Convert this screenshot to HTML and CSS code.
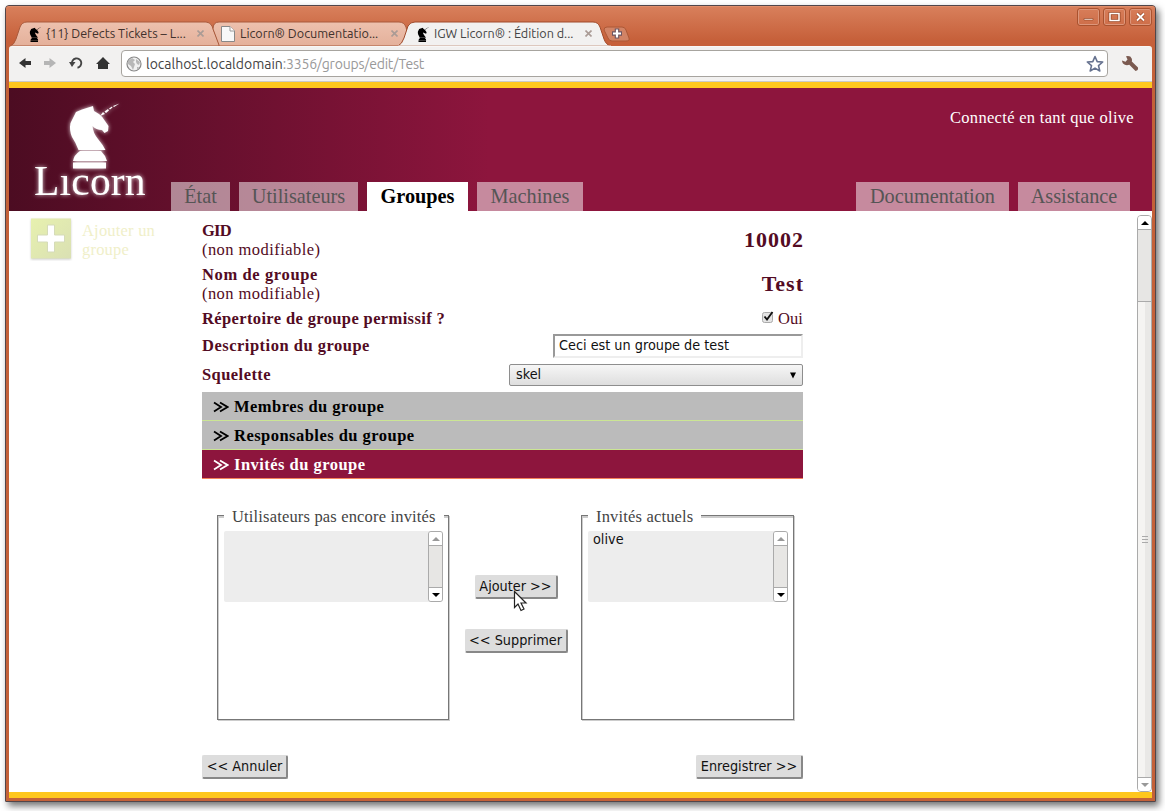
FILE: index.html
```html
<!DOCTYPE html>
<html lang="fr">
<head>
<meta charset="utf-8">
<title>IGW Licorn® : Édition de groupe</title>
<link rel="stylesheet" href="styles.css">
</head>
<body>
<svg class="defs" width="0" height="0">
  <defs>
    <linearGradient id="tabfill" x1="0" y1="0" x2="0" y2="1"><stop offset="0" stop-color="#edc1ae"/><stop offset="1" stop-color="#e4b09a"/></linearGradient>
    <symbol id="knight" viewBox="69 103 52 66">
      <path d="M93 106L94 111L99 114Q103 117 105 121L108.500 126L108 131L104.500 133L102 130Q96 130 92.500 126Q93 133 98 139Q103 145 105.500 150H78.500Q76 143 72 137Q69 130 70.500 123L76 112L82 109.500ZM80 151H101L105 156L107 161H73Q74 155 80 151ZM73 162.500H106V168.500H73Z"/>
      <path d="M100 116L103 112L105 114ZM104.500 111.500L108 109L109 110.500L106 113ZM109 108.500L112 106.500L112.500 107.500L110 109.500ZM113 106L119.500 103.500L114 107Z"/>
    </symbol>
  </defs>
</svg>
<div class="window">
  <header class="titlebar">
    <svg class="tabshapes" width="1143" height="40" viewBox="9 6 1143 40">
      <path d="M10 46Q14 45 16 39L20 27Q22 22 27 22H206Q210 22 212 26L220 46Z" fill="url(#tabfill)" stroke="#a95a3c"/>
      <path d="M219 45L213 29Q213 22 219 22H399Q404 22 406 27L410 46H219Z" fill="url(#tabfill)" stroke="#a95a3c"/>
      <path d="M398 46Q402 44 404 38L408 26Q410 22 415 22H593Q598 22 600 27L604 39Q606 45 611 46Z" fill="#f2f1f0" stroke="#a04b2b"/>
      <path d="M398 46.500H611" stroke="#f2f1f0" stroke-width="2"/>
      <path d="M607 27H622Q625 27 626 30L629 38Q630 41 626 41H612Q609 41 608 38L604 30Q604 27 607 27Z" fill="#d28365" stroke="#ac5836"/>
      <path d="M617 28.500V38.500M612 33.500H622" stroke="#6e5662" stroke-width="4.500"/>
      <path d="M617 29.500V37.500M613 33.500H621" stroke="#fff" stroke-width="2.200"/>
    </svg>
    <nav class="tabs">
      <div class="tab"><svg class="favicon" width="13" height="15"><use href="#knight"/></svg><span class="tab-title">{11} Defects Tickets – L...</span><i class="close"><svg width="7" height="7" viewBox="0 0 7 7"><path d="M.5.5L6.500 6.500M6.500.5L.5 6.500"/></svg></i></div>
      <div class="tab second"><svg class="favicon page" width="14" height="16" viewBox="0 0 14 16"><path d="M.5.5H9L13.500 5V15.500H.5Z" fill="#f8f8f8" stroke="#888"/><path d="M9 .5V5H13.500" fill="#fff" stroke="#999"/></svg><span class="tab-title">Licorn® Documentatio...</span><i class="close"><svg width="7" height="7" viewBox="0 0 7 7"><path d="M.5.5L6.500 6.500M6.500.5L.5 6.500"/></svg></i></div>
      <div class="tab third"><svg class="favicon" width="13" height="15"><use href="#knight"/></svg><span class="tab-title">IGW Licorn® : Édition d...</span><i class="close"><svg width="7" height="7" viewBox="0 0 7 7"><path d="M.5.5L6.500 6.500M6.500.5L.5 6.500"/></svg></i></div>
    </nav>
    <div class="controls">
      <b><svg width="21" height="16"><path d="M6 9.500H15V11H6Z" fill="#fff" stroke="#984726" stroke-width=".7"/></svg></b>
      <b><svg width="21" height="16"><rect x="6" y="4.500" width="9" height="7" fill="none" stroke="#984726" stroke-width="3"/><rect x="6" y="4.500" width="9" height="7" fill="none" stroke="#fff" stroke-width="1.500"/></svg></b>
      <b><svg width="21" height="16"><path d="M7 4.500L14 11.500M14 4.500L7 11.500" stroke="#984726" stroke-width="3.200"/><path d="M7 4.500L14 11.500M14 4.500L7 11.500" stroke="#fff" stroke-width="1.800"/></svg></b>
    </div>
  </header>
  <div class="toolbar">
    <svg class="navicons" width="112" height="34" viewBox="9 47 112 34">
      <path d="M19 63L25.500 58V61H31V65H25.500V68Z" fill="#333"/>
      <path d="M56 63L49.500 58V61H44V65H49.500V68Z" fill="#b5b5b5"/>
      <path d="M72 64A4.700 4.700 0 1 1 77.500 67.700" fill="none" stroke="#444" stroke-width="1.900"/><path d="M69 62L75.500 62L72 67Z" fill="#444"/>
      <path d="M103 57L110 64H108V69H98V64H96Z" fill="#333"/>
    </svg>
    <div class="address">
      <svg width="16" height="16" viewBox="0 0 16 16"><circle cx="8" cy="8" r="7" fill="#f1f1f1" stroke="#888" stroke-width="1.200"/><path d="M2 5L6 2L9 4L7 6L9 8L8 11L7 14L5 10L2 8ZM10 3L14 6L13 9L11 8L10 6ZM11 11L13 11L11 14Z" fill="#b8b8b8"/></svg>
      <span class="url"><span class="host">localhost.localdomain</span><span class="path">:3356/groups/edit/Test</span></span>
      <svg class="star" width="18" height="18" viewBox="0 0 18 18"><path d="M9 1.500L11.200 6.600L16.700 7L12.500 10.600L13.800 16L9 13.100L4.200 16L5.500 10.600L1.300 7L6.800 6.600Z" fill="#fff" stroke="#66728f" stroke-width="1.600" stroke-linejoin="round"/></svg>
    </div>
    <svg class="wrench" width="18" height="18" viewBox="0 0 18 18"><path d="M1 5.500L4.500 6.800L6.500 4.500L5 1.300Q9.500.3 10.700 3.500Q11.300 5 10.800 6.500L17 12.500Q17.500 15.500 14.500 16L8.300 9.800Q4.500 11 2 8.500Q1 7 1 5.500Z" fill="#7b5a50"/></svg>
  </div>
  <div class="stripe"></div>
  <div class="banner">
    <div class="logo">
      <svg class="logo-knight" width="52" height="66"><use href="#knight"/></svg>
      <span class="logo-text">Lıcorn</span>
    </div>
    <div class="banner-main">
      <p class="session">Connecté en tant que olive</p>
      <nav class="menu">
        <a class="m-etat">État</a><a class="m-users">Utilisateurs</a><a class="m-groups active">Groupes</a><a class="m-machines">Machines</a><a class="m-doc">Documentation</a><a class="m-assist">Assistance</a>
      </nav>
    </div>
  </div>
  <main class="content">
    <aside class="side">
      <svg width="46" height="46" viewBox="0 0 46 46"><defs><linearGradient id="add" x2="1" y2="1"><stop offset="0" stop-color="#e7f1af"/><stop offset="1" stop-color="#dae0b3"/></linearGradient></defs><rect class="plus-tile" x="3" y="3.500" width="40" height="40" fill="url(#add)"/><path d="M19.500 10H26.500V20H36.500V27H26.500V37H19.500V27H9.500V20H19.500Z" fill="#fff" stroke="#d5dbb8"/></svg>
      <span>Ajouter un<br>groupe</span>
    </aside>
    <section class="form">
      <div class="row two"><div class="label"><strong class="l-gid">GID</strong><span>(non modifiable)</span></div><strong class="value">10002</strong></div>
      <div class="row two"><div class="label"><strong class="l-nom">Nom de groupe</strong><span>(non modifiable)</span></div><strong class="value">Test</strong></div>
      <div class="row perm"><strong>Répertoire de groupe permissif ?</strong><span class="yes"><svg width="14" height="14" viewBox="0 0 14 14"><rect x="1.500" y="2.500" width="10" height="10" rx="2" fill="#e4e4e4" stroke="#aaa"/><path d="M3.500 6.500L6 9.500L11.500 2" fill="none" stroke="#111" stroke-width="1.900"/></svg>Oui</span></div>
      <div class="row desc"><strong>Description du groupe</strong><div class="input">Ceci est un groupe de test</div></div>
      <div class="row skel"><strong>Squelette</strong><div class="select"><span>skel</span><svg width="8" height="7"><path d="M1 .5H7L4 6.500Z"/></svg></div></div>
      <div class="accordion">
        <div class="fold"><svg width="16" height="12" viewBox="0 0 16 12"><path d="M1 1.500L8 6L1 10.500M7 1.500L14.500 6L7 10.500"/></svg><strong>Membres du groupe</strong></div>
        <div class="fold"><svg width="16" height="12" viewBox="0 0 16 12"><path d="M1 1.500L8 6L1 10.500M7 1.500L14.500 6L7 10.500"/></svg><strong>Responsables du groupe</strong></div>
        <div class="fold open"><svg width="16" height="12" viewBox="0 0 16 12"><path d="M1 1.500L8 6L1 10.500M7 1.500L14.500 6L7 10.500"/></svg><strong>Invités du groupe</strong></div>
      </div>
      <div class="picker">
        <div class="box left"><div class="legend"><span>Utilisateurs pas encore invités</span></div>
          <div class="list"><div class="options"></div><div class="mini"><i><svg width="8" height="4"><path d="M0 4L4 0L8 4Z" fill="#999"/></svg></i><i><svg width="8" height="4"><path d="M0 0H8L4 4Z"/></svg></i></div></div>
        </div>
        <div class="moves">
          <div class="button b-add">Ajouter &gt;&gt;<svg class="cursor" width="16" height="23" viewBox="0 0 16 23"><path d="M1.500 1.500V17.500L5 14L8 20.500L11 19L8 13H13Z" fill="#fff" stroke="#222" stroke-width="1.200"/></svg></div>
          <div class="button b-del">&lt;&lt; Supprimer</div>
        </div>
        <div class="box right"><div class="legend"><span>Invités actuels</span></div>
          <div class="list"><div class="options">olive</div><div class="mini"><i><svg width="8" height="4"><path d="M0 4L4 0L8 4Z" fill="#999"/></svg></i><i><svg width="8" height="4"><path d="M0 0H8L4 4Z"/></svg></i></div></div>
        </div>
      </div>
      <div class="actions"><div class="button b-cancel">&lt;&lt; Annuler</div><div class="button b-save">Enregistrer &gt;&gt;</div></div>
    </section>
    <div class="scrollbar">
      <i class="up"><svg width="8" height="4"><path d="M0 4L4 0L8 4Z"/></svg></i>
      <div class="trough"></div>
      <div class="thumb"><em></em><em></em><em></em></div>
      <i class="down"><svg width="8" height="4"><path d="M0 0H8L4 4Z" fill="#999"/></svg></i>
    </div>
  </main>
  <div class="stripe bottom"></div>
</div>
</body>
</html>
```
FILE: styles.css
```css
* { box-sizing: border-box; }
body { margin: 0; padding: 5px 0 0 5px; width: 1165px; height: 811px; overflow: hidden; background: #fff; font-family: "Droid Serif", "Liberation Serif", serif; font-size: 16.5px; color: #530b23; }
svg { display: block; flex: none; }
.defs { position: absolute; }
i { font-style: normal; }
.window { width: 1151px; height: 797px; padding: 0 3px 3px; border: 1px solid #51464a; border-radius: 4px 4px 1px 1px; background: #c46139; box-shadow: 3px 4px 7px rgba(0,0,0,.55); display: flex; flex-direction: column; }
.titlebar { position: relative; height: 40px; flex: none; margin: 0 -3px; padding: 0 3px; display: flex; justify-content: space-between; border-top: 1px solid #e08d69; border-radius: 3px 3px 0 0; background: linear-gradient(#d87f5b, #c6603a 85%); }
.tabshapes { position: absolute; left: 3px; top: -1px; }
.tabs { position: relative; display: flex; padding: 14px 0 0 20px; }
.tab { display: flex; align-items: center; height: 24px; width: 192px; font-family: "Ubuntu", "Noto Sans", sans-serif; font-size: 12.6px; color: #40302b; }
.tab .favicon { margin-right: 4px; position: relative; top: 1px; }
.tab .page { margin-right: 5px; }
.tab.third { width: 200px; margin-left: 4px; }
.tab.third { color: #444; }
.tab-title { white-space: nowrap; width: 147px; }
.close { padding-left: 4px; }
.close svg { fill: none; stroke: #aa9b95; stroke-width: 1.6; }
.controls { display: flex; gap: 3px; padding: 1px 0 0 0; position: relative; }
.controls b { width: 23px; height: 18px; border: 1px solid #a9522f; border-radius: 3px; box-shadow: inset 0 0 0 1px #dd967b; }
.toolbar { height: 36px; flex: none; display: flex; align-items: center; background: #f2f1f0; border-top: 1px solid #f8f7f6; border-bottom: 1px solid #c9c9c9; border-radius: 3px 3px 0 0; }
.address { width: 987px; height: 27px; display: flex; align-items: center; margin-top: -1px; padding: 0 3px 0 4px; border: 1px solid #a7a49f; border-radius: 4px; background: #fff; }
.url { flex: 1; padding-left: 4px; font-family: "Ubuntu", "Noto Sans", sans-serif; font-size: 14px; white-space: nowrap; color: #444; }
.path { color: #999; letter-spacing: -.2px; }
.wrench { margin-left: 13px; }
.stripe { height: 6px; flex: none; background: #fec71e; }
.banner { height: 123px; flex: none; display: flex; color: #fff; background: linear-gradient(90deg, #4c0c22 0, #8d153d 480px); }
.logo { width: 162px; padding: 15px 0 0 25px; fill: #fff; filter: drop-shadow(0 0 2px #fffc); }
.logo-knight { margin-left: 35px; }
.logo-text { display: block; font-size: 41.5px; line-height: 46px; margin-top: -11px; letter-spacing: .2px; }
.banner-main { flex: 1; display: flex; flex-direction: column; justify-content: space-between; }
.session { margin: 20px 18px 0 0; text-align: right; line-height: 20px; letter-spacing: .31px; }
.menu { display: flex; gap: 9px; padding-right: 22px; line-height: 29px; font-size: 20.3px; }
.menu a { height: 29px; text-align: center; white-space: nowrap; color: #555; background: rgba(255,255,255,.5); }
.m-etat { width: 59px; }
.m-users { width: 119px; }
.m-groups { width: 101px; }
.m-machines { width: 106px; }
.m-doc { width: 153px; margin-left: auto; }
.m-assist { width: 112px; }
.menu .active { color: #000; background: #fff; font-weight: bold; }
.content { flex: 1; min-height: 0; display: flex; background: #fff; }
.side { width: 193px; padding: 4px 0 0 19px; display: flex; gap: 8px; line-height: 19px; color: #f0efc9; letter-spacing: .2px; }
.side span { padding-top: 6px; }
.plus-tile { filter: drop-shadow(0 1px 1px #0003); }
.form { width: 601px; padding-top: 10px; }
.row { display: flex; justify-content: space-between; line-height: 19px; white-space: nowrap; letter-spacing: .44px; }
.row.two { height: 38px; margin-bottom: 6px; align-items: center; }
.label { display: flex; flex-direction: column; }
.l-gid { letter-spacing: -.8px; }
.l-nom { letter-spacing: .62px; }
.value { font-size: 22px; line-height: 30px; letter-spacing: 1px; margin-right: -1px; }
.perm { height: 19px; margin-bottom: 6px; letter-spacing: .37px; }
.yes { display: flex; align-items: center; gap: 3px; letter-spacing: .1px; }
.yes svg { margin-bottom: 3px; }
.desc { height: 24px; align-items: center; margin-bottom: 6px; letter-spacing: .5px; }
.desc strong, .skel strong { padding-bottom: 2px; }
.input, .select, .button, .options { font-family: "DejaVu Sans Condensed", "DejaVu Sans", sans-serif; font-stretch: condensed; font-size: 14.3px; letter-spacing: 0; color: #111; white-space: nowrap; }
.input { width: 250px; height: 24px; padding-left: 4px; border: 2px solid #eee; border-top-color: #999; border-left-color: #999; line-height: 18px; }
.skel { height: 22px; align-items: center; margin-bottom: 6px; }
.select { width: 294px; height: 22px; display: flex; justify-content: space-between; align-items: center; padding: 0 5px 0 6px; border: 1px solid #8e8e8e; border-radius: 2px; background: linear-gradient(#f6f6f6, #dedede); }
.select span { padding-bottom: 2px; }
.accordion { height: 87px; letter-spacing: .47px; }
.fold { display: flex; align-items: center; gap: 5px; height: 29px; padding: 2px 0 0 11px; background: #bbb; border-bottom: 1px solid #cbe594; color: #000; }
.fold svg { fill: none; stroke: currentColor; stroke-width: 1.8; }
.fold.open { color: #fff; background: #8d153d; border-bottom-color: #f4835a; }
.picker { display: flex; margin: 36px 8px 0 15px; height: 205px; color: #444; letter-spacing: .17px; }
.box { border: solid #777; border-width: 0 1px 1px; box-shadow: 1px 1px #ccc, inset 1px 0 #ccc; padding: 0 5px 0 6px; }
.box.left { width: 232px; }
.box.right { width: 213px; }
.legend { display: flex; align-items: center; height: 2px; margin: 0 -5px 0 -6px; line-height: 20px; white-space: nowrap; }
.legend::before, .legend::after { content: ""; height: 2px; border-top: 1px solid #777; background: #ccc; }
.legend::before { width: 6px; }
.legend::after { flex: 1; }
.legend span { padding: 2px 8px 0; }
.list { display: flex; margin-top: 14px; height: 71px; border-radius: 2px; background: #ededed; }
.options { flex: 1; padding: 0 5px; line-height: 17px; }
.mini { width: 15px; display: flex; flex-direction: column; justify-content: space-between; border: 1px solid #aaa; border-radius: 3px; background: #e7e6e4; overflow: hidden; }
.mini i { height: 14px; display: grid; place-items: center; background: #fff; }
.mini i:first-child { border-bottom: 1px solid #aaa; }
.mini i:last-child { border-top: 1px solid #aaa; }
.moves { width: 132px; display: flex; flex-direction: column; align-items: center; gap: 30px; padding: 60px 0 0 2px; }
.button { position: relative; height: 24px; border: 1px solid #ddd; border-right: 2px solid #888; border-bottom: 2px solid #888; border-radius: 2px; background: #ddd; line-height: 20px; text-align: center; }
.b-add { width: 83px; }
.b-del { width: 103px; }
.b-cancel { width: 86px; }
.b-save { width: 107px; }
.cursor { position: absolute; left: 37px; top: 14px; }
.actions { display: flex; justify-content: space-between; margin-top: 35px; }
.scrollbar { width: 15px; height: 577px; margin: 4px 0 0 auto; display: flex; flex-direction: column; border: 1px solid #aaa; border-radius: 4px; background: #e7e6e4; overflow: hidden; }
.scrollbar i { height: 14px; flex: none; display: grid; place-items: center; background: #fff; }
.up { border-bottom: 1px solid #aaa; }
.down { border-top: 1px solid #aaa; }
.trough { height: 72px; flex: none; border-bottom: 1px solid #aaa; }
.thumb { flex: 1; display: flex; flex-direction: column; justify-content: center; align-items: center; gap: 2px; background: linear-gradient(90deg, #f5f4f2 50%, #e9e8e6 50%); }
.thumb em { width: 6px; height: 1px; background: #aaa; }
```
